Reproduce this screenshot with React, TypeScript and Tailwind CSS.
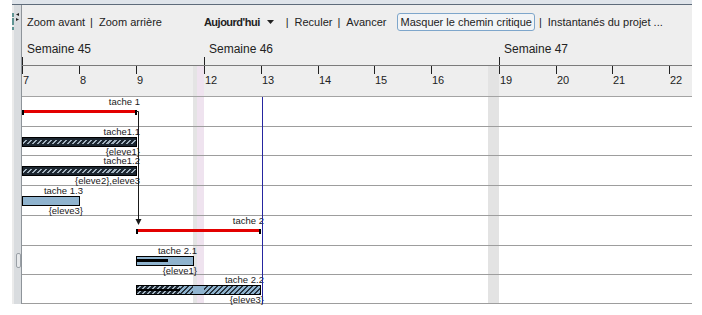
import React from 'react';

type Day = { label?: string; w: number; weekend?: 'pink' | 'gray' };

type Task = {
  name: string;
  res?: string;
  x: number;
  w: number;
  kind: 'summary' | 'hatched' | 'plain' | 'mixed';
  progress?: number;
};

const days: Day[] = [
  { label: '7', w: 57 },
  { label: '8', w: 57 },
  { label: '9', w: 57 },
  { w: 11, weekend: 'pink' },
  { label: '12', w: 57 },
  { label: '13', w: 57 },
  { label: '14', w: 56 },
  { label: '15', w: 57 },
  { label: '16', w: 57 },
  { w: 11, weekend: 'gray' },
  { label: '19', w: 57 },
  { label: '20', w: 56 },
  { label: '21', w: 57 },
  { label: '22', w: 23 },
];

const weeks = [
  { label: 'Semaine 45', w: 182 },
  { label: 'Semaine 46', w: 295 },
  { label: 'Semaine 47', w: 193 },
];

const rows: { h: number; task: Task }[] = [
  { h: 30, task: { name: 'tache 1', x: 0, w: 115, kind: 'summary' } },
  { h: 29, task: { name: 'tache1.1', res: '{eleve1}', x: 0, w: 115, kind: 'hatched' } },
  { h: 30, task: { name: 'tache1.2', res: '{eleve2},eleve3', x: 0, w: 115, kind: 'hatched' } },
  { h: 30, task: { name: 'tache 1.3', res: '{eleve3}', x: 0, w: 58, kind: 'plain' } },
  { h: 30, task: { name: 'tache 2', x: 114, w: 125, kind: 'summary' } },
  { h: 29, task: { name: 'tache 2.1', res: '{eleve1}', x: 114, w: 58, kind: 'plain', progress: 31 } },
  { h: 29, task: { name: 'tache 2.2', res: '{eleve3}', x: 114, w: 125, kind: 'mixed' } },
];

const darkHatch =
  'bg-[image:repeating-linear-gradient(135deg,#1c2630_0px,#1c2630_2px,#a2b2bf_2px,#a2b2bf_3.5px)]';
const lightHatch =
  'bg-[image:repeating-linear-gradient(135deg,#8fb3ce_0px,#8fb3ce_2px,#26313c_2px,#26313c_3.5px)]';

function WeekendCell({ day }: { day: Day }) {
  if (day.weekend === 'pink') {
    return (
      <div className="flex shrink-0" style={{ width: day.w }}>
        <div className="w-[4px] bg-[#e4e4e4]" />
        <div className="flex-1 bg-[#efe3ef]" />
      </div>
    );
  }
  return <div className="shrink-0 bg-[#e3e3e3]" style={{ width: day.w }} />;
}

function Bar({ t }: { t: Task }) {
  if (t.kind === 'summary') {
    return (
      <div className="mt-[3px] h-[3px] bg-[#e30000] flex justify-between items-start" style={{ width: t.w }}>
        <span className="w-[2px] h-[5px] bg-black" />
        <span className="w-[2px] h-[5px] bg-black" />
      </div>
    );
  }
  if (t.kind === 'hatched') {
    return (
      <div className="h-[10px] border border-black bg-[#1c2630] py-[2px]" style={{ width: t.w }}>
        <div className={`h-full ${darkHatch}`} />
      </div>
    );
  }
  if (t.kind === 'mixed') {
    return (
      <div className="h-[10px] border border-black flex" style={{ width: t.w }}>
        <div className="w-[43px] flex flex-col">
          <div className={`h-[3px] ${darkHatch}`} />
          <div className="h-[2px] bg-black" />
          <div className={`h-[3px] ${darkHatch}`} />
        </div>
        <div className={`w-[13px] ${lightHatch}`} />
        <div className="w-[11px] bg-[#8fb3ce]" />
        <div className={`flex-1 ${lightHatch}`} />
      </div>
    );
  }
  return (
    <div className="h-[10px] border border-black bg-[#8fb3ce] pt-[2px]" style={{ width: t.w }}>
      {t.progress ? <div className="h-[3px] bg-black" style={{ width: t.progress }} /> : null}
    </div>
  );
}

function TaskBar({ t }: { t: Task }) {
  return (
    <div className="flex flex-col text-[9.5px] leading-[10px] text-[#1a1a1a]" style={{ marginLeft: t.x, width: t.w + 3 }}>
      <span className="h-[10px] text-right whitespace-nowrap">{t.name}</span>
      <Bar t={t} />
      {t.res && <span className="h-[9px] leading-[9px] text-right whitespace-nowrap">{t.res}</span>}
    </div>
  );
}

function LeftStrip() {
  return (
    <div className="w-[10px] flex border-r border-[#8e949a] bg-[#d9dcdf]">
      <div className="w-[2px] bg-[#ebebeb] flex flex-col">
        <div className="h-[8px]" />
        <div className="h-[4px] bg-[#5f9493]" />
        <div className="h-[1px]" />
        <div className="h-[7px] bg-[#5f9493]" />
        <div className="h-[2px]" />
        <div className="h-[3px] bg-[#5f9493]" />
      </div>
      <div className="flex-1 flex flex-col pl-[2px]">
        <svg width="3" height="3" viewBox="0 0 3 3" className="mt-[8px]">
          <polygon points="3,0 3,3 0,1.5" fill="#222" />
        </svg>
        <svg width="3" height="3" viewBox="0 0 3 3" className="mt-[2px]">
          <polygon points="0,0 0,3 3,1.5" fill="#222" />
        </svg>
        <div className="mt-[232px] w-[5px] h-[15px] rounded-[2px] border border-[#9aa0a6] bg-[#e7e9eb]" />
      </div>
    </div>
  );
}

function Toolbar() {
  return (
    <div className="h-[34px] flex items-center text-[11px] text-[#222] whitespace-nowrap">
      <span className="ml-[5px]">Zoom avant</span>
      <span className="ml-[5px]">|</span>
      <span className="ml-[6px]">Zoom arrière</span>
      <span className="ml-[42px] font-bold tracking-[-0.5px]">Aujourd'hui</span>
      <svg width="7" height="4" viewBox="0 0 7 4" className="ml-[7px]">
        <polygon points="0,0 7,0 3.5,4" fill="#222" />
      </svg>
      <span className="ml-[12px]">|</span>
      <span className="ml-[6px]">Reculer</span>
      <span className="ml-[5px]">|</span>
      <span className="ml-[6px]">Avancer</span>
      <span className="ml-[11px] h-[18px] px-[2px] flex items-center rounded-[3px] border border-[#7ea6cb] bg-[#f2f4f6]">
        Masquer le chemin critique
      </span>
      <span className="ml-[4px]">|</span>
      <span className="ml-[6px]">Instantanés du projet ...</span>
    </div>
  );
}

function WeekRow() {
  return (
    <div className="h-[27px] flex border-b border-[#7b7b7b]">
      {weeks.map((w) => (
        <div key={w.label} className="flex flex-col justify-between shrink-0" style={{ width: w.w }}>
          <span className="pl-[5px] pt-[3px] text-[12px] leading-[14px] text-[#222]">{w.label}</span>
          <span className="w-px h-[8px] bg-[#222]" />
        </div>
      ))}
    </div>
  );
}

function DayRow() {
  return (
    <div className="h-[31px] flex border-b border-[#a3a3a3]">
      {days.map((d, i) =>
        d.weekend ? (
          <WeekendCell key={i} day={d} />
        ) : (
          <div key={i} className="flex flex-col shrink-0" style={{ width: d.w }}>
            <span className="w-px h-[8px] bg-[#222]" />
            <span className="pl-[1px] text-[11px] leading-[13px] text-[#222]">{d.label}</span>
          </div>
        )
      )}
    </div>
  );
}

function ChartBody() {
  return (
    <div className="relative h-[207px] bg-white">
      <div className="absolute inset-0 flex">
        {days.map((d, i) =>
          d.weekend ? <WeekendCell key={i} day={d} /> : <div key={i} className="shrink-0" style={{ width: d.w }} />
        )}
      </div>
      {rows.map((r, i) => (
        <div key={i} className="relative border-b border-[#9d9d9d]" style={{ height: r.h }}>
          <TaskBar t={r.task} />
        </div>
      ))}
      <div className="absolute top-0 bottom-0 left-[240px] w-px bg-[#2626a0]" />
      <svg className="absolute left-0 top-0 pointer-events-none" width="670" height="207">
        <path d="M114 14.5 H116.5 V123" stroke="#1a1a1a" strokeWidth="1" fill="none" />
        <polygon points="113.5,122 119.5,122 116.5,128" fill="#1a1a1a" />
      </svg>
    </div>
  );
}

export default function App() {
  return (
    <div className="w-[702px] h-[315px] bg-white overflow-hidden font-['Liberation_Sans',Arial,sans-serif]">
      <div className="ml-[12px] w-[680px] flex flex-col">
        <div className="h-[5px] bg-[#dfe4ea] border-b border-[#5e6b7a]" />
        <div className="flex h-[299px]">
          <LeftStrip />
          <div className="w-[670px] flex flex-col bg-[#eeeeee]">
            <Toolbar />
            <WeekRow />
            <DayRow />
            <ChartBody />
          </div>
        </div>
      </div>
    </div>
  );
}
